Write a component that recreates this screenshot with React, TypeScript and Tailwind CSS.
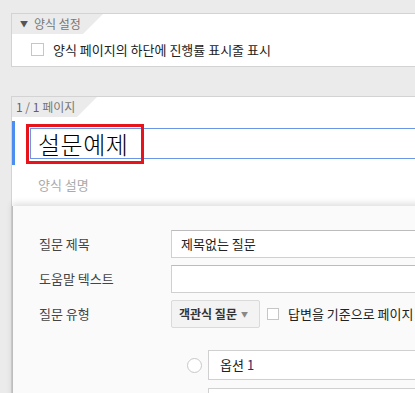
const font = { fontFamily: '"Noto Sans CJK KR", "Noto Sans", sans-serif' }

function Tab({ children, w }: { children: React.ReactNode; w: string }) {
  return (
    <div
      className={`h-[20px] ${w} bg-[#ebebeb] flex items-center [clip-path:polygon(0_0,100%_0,calc(100%-20px)_100%,0_100%)]`}
    >
      {children}
    </div>
  )
}

function App() {
  return (
    <div
      className="w-[415px] h-[393px] overflow-hidden bg-[#ebebeb] relative"
      style={font}
    >
      <div className="pt-[13px] pl-[11px]">
        {/* 양식 설정 */}
        <div className="w-[420px] h-[54px] bg-white border border-[#d3d3d3]">
          <Tab w="w-[91px]">
            <span className="ml-[8px] text-[8px] text-[#555]">▼</span>
            <span className="ml-[6px] text-[12px] text-[#777] leading-none">양식 설정</span>
          </Tab>
          <div className="flex items-center h-[31px] pl-[19px]">
            <div className="w-[13px] h-[13px] border border-[#c6c6c6] bg-white" />
            <span className="ml-[9px] text-[13px] text-[#222] leading-none">
              양식 페이지의 하단에 진행률 표시줄 표시
            </span>
          </div>
        </div>

        {/* 페이지 */}
        <div className="mt-[29px] w-[420px] h-[320px] bg-white border-t border-l border-[#d3d3d3]">
          <Tab w="w-[85px]">
            <span className="ml-[4px] text-[12px] leading-none text-[#777]">
              <span className="text-[#6a5a7a]">1</span> / <span className="text-[#6a5a7a]">1</span> 페이지
            </span>
          </Tab>
          <div className="flex mt-[4px]">
            <div className="w-[3px] h-[44px] bg-[#4d8df0]" />
            <div className="flex-1 pl-[15px] pt-[7px] relative">
              <div className="h-[31px] border border-[#6b95e6] flex items-center pl-[7px]">
                <span className="text-[24px] text-black font-light leading-none tracking-[0.5px]">설문예제</span>
              </div>
              <div className="absolute left-[11px] top-[3px] w-[118px] h-[40px] border-[3px] border-[#e8141c]" />
            </div>
          </div>
          <div className="pl-[26px] mt-[13px] text-[13px] text-[#aaa] leading-none">양식 설명</div>

          {/* 질문 카드 */}
          <div className="mt-[15px] h-[200px] bg-[#fafafa] border-l border-[#bdbdbd] shadow-[0_-3px_6px_rgba(0,0,0,0.12)] relative">
            <div className="absolute right-[9px] top-[7px] grid grid-cols-2 gap-[1px]">
              <div className="w-[2px] h-[2px] bg-[#ccc]" />
              <div className="w-[2px] h-[2px] bg-[#ccc]" />
              <div className="w-[2px] h-[2px] bg-[#ccc]" />
              <div className="w-[2px] h-[2px] bg-[#ccc]" />
            </div>
            <div className="pt-[24px] pl-[26px] flex flex-col gap-[7px]">
              <div className="flex items-center">
                <span className="w-[132px] shrink-0 text-[13px] text-[#444]">질문 제목</span>
                <div className="flex-1 h-[28px] bg-white border border-[#d0d0d0] border-t-[#bcbcbc] flex items-center pl-[9px] text-[13px] text-[#222]">
                  제목없는 질문
                </div>
              </div>
              <div className="flex items-center">
                <span className="w-[132px] shrink-0 text-[13px] text-[#444]">도움말 텍스트</span>
                <div className="flex-1 h-[28px] bg-white border border-[#d0d0d0] border-t-[#bcbcbc]" />
              </div>
              <div className="flex items-center">
                <span className="w-[132px] shrink-0 text-[13px] text-[#444]">질문 유형</span>
                <div className="h-[28px] w-[89px] shrink-0 bg-[#f3f3f3] border border-[#dadada] rounded-[2px] flex items-center pl-[7px] gap-[4px]">
                  <span className="text-[12px] font-bold text-[#333]">객관식 질문</span>
                  <span className="text-[7px] text-[#888]">▼</span>
                </div>
                <div className="ml-[7px] shrink-0 w-[12px] h-[12px] border border-[#c6c6c6] bg-white" />
                <span className="ml-[9px] text-[13px] text-[#222] whitespace-nowrap">답변을 기준으로 페이지</span>
              </div>
            </div>
            <div className="flex items-center mt-[22px] pl-[174px]">
              <div className="w-[15px] h-[15px] rounded-full border border-[#c8c8c8] bg-white" />
              <div className="ml-[6px] flex-1 h-[30px] bg-white border border-[#d0d0d0] flex items-center pl-[11px] text-[13px] text-[#222]">
                옵션 <span className="ml-[3px] text-[#2a2a6a]">1</span>
              </div>
            </div>
            <div className="mt-[8px] ml-[195px] h-[30px] bg-white border border-[#d0d0d0]" />
          </div>
        </div>
      </div>
    </div>
  )
}

export default App
